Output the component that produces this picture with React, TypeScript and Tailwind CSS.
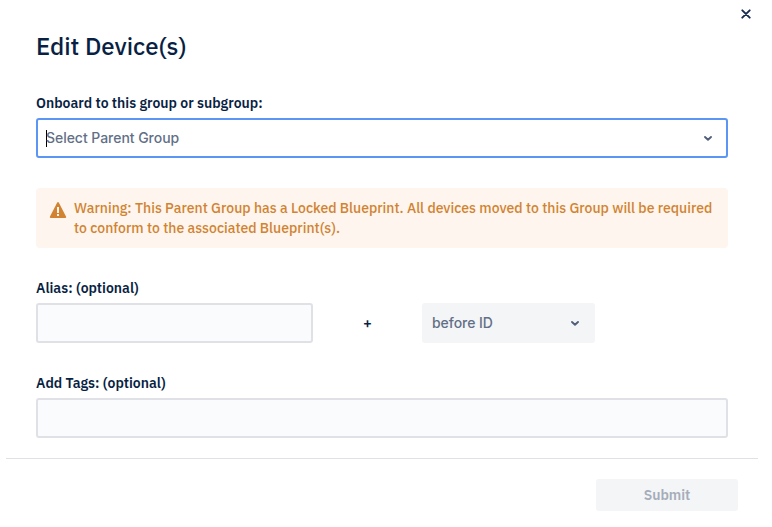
import React from "react";

const Chevron = () => (
  <svg className="size-6 shrink-0" viewBox="0 0 24 24" fill="none" stroke="#505f79" strokeWidth="1.9" strokeLinecap="round" strokeLinejoin="round" aria-hidden="true">
    <path d="M9 11l3 2.8 3-2.8" />
  </svg>
);

const WarningIcon = () => (
  <svg className="h-[17px] w-[18px] shrink-0" viewBox="0 0 18 17" aria-hidden="true">
    <path d="M8.1.7Q9-.5 9.9.7L17 14.6Q17.6 16 16.2 16H1.8Q.4 16 1 14.6Z" fill="#d18331" />
    <path d="M8 5h2v6H8zM8 12h2v2H8z" fill="#fdf5ee" />
  </svg>
);

const Label = ({ children }: { children: React.ReactNode }) => (
  <label className="block h-5 text-sm leading-5 font-semibold whitespace-nowrap">{children}</label>
);

export default function App() {
  return (
    <main className="flex h-[527px] w-[772px] flex-col overflow-hidden bg-white font-['IBM_Plex_Sans',Roboto,sans-serif] text-[#0a1f44]">
      <header className="flex h-[93px] items-start justify-between pr-[21px] pl-9">
        <h1 className="mt-[30px] text-2xl leading-8 font-medium">Edit Device(s)</h1>
        <button className="mt-[9px] size-[10px]" aria-label="Close">
          <svg className="size-[10px]" viewBox="0 0 10 10" fill="none" stroke="#172b4d" strokeWidth="1.9" strokeLinecap="round">
            <path d="M1.3 1.3l7.4 7.4M8.7 1.3L1.3 8.7" />
          </svg>
        </button>
      </header>

      <section className="flex h-[365px] flex-col pr-11 pl-9">
        <Label>Onboard to this group or subgroup:</Label>
        <div className="mt-[5px] flex h-10 items-center justify-between rounded-[3px] border-2 border-[#5c96f4] bg-white pr-[6px] pl-2">
          <div className="flex items-center">
            <span className="-mr-px h-[17px] w-px bg-black" />
            <span className="font-[Inter,sans-serif] text-sm leading-5 font-medium tracking-[-0.04px] text-[#626f86]">Select Parent Group</span>
          </div>
          <Chevron />
        </div>

        <div className="mt-[30px] flex h-[60px] items-start gap-[7px] rounded bg-[#fdf5ee] pt-[10px] pl-[13px] text-sm leading-5 font-medium tracking-[0.01px] text-[#d18331]">
          <div className="mt-1"><WarningIcon /></div>
          <p className="whitespace-nowrap">Warning: This Parent Group has a Locked Blueprint. All devices moved to this Group will be required<br />to conform to the associated Blueprint(s).</p>
        </div>

        <div className="mt-[30px]">
          <Label>Alias: (optional)</Label>
          <div className="mt-[5px] flex h-10 items-center">
            <input aria-label="Alias" className="h-10 w-[277px] rounded-[3px] border-2 border-[#dfe1e6] bg-[#fafbfc] outline-none" />
            <span className="w-[109px] text-center font-[Inter,sans-serif] text-sm leading-5 font-semibold">+</span>
            <div className="flex h-10 w-[173px] items-center justify-between rounded-[3px] bg-[#f4f5f7] pr-2 pl-[10px]">
              <span className="font-[Inter,sans-serif] text-sm leading-5 font-medium tracking-[-0.04px] text-[#626f86]">before ID</span>
              <Chevron />
            </div>
          </div>
        </div>

        <div className="mt-[30px]">
          <Label>Add Tags: (optional)</Label>
          <input aria-label="Tags" className="mt-[5px] block h-10 w-full rounded-[3px] border-2 border-[#dfe1e6] bg-[#fafbfc] outline-none" />
        </div>
      </section>

      <footer className="mr-[14px] ml-[6px] flex justify-end border-t border-[#dfe1e6] pt-5 pr-5">
        <button className="h-8 w-[142px] rounded-[3px] bg-[#f4f5f7] text-sm leading-5 font-semibold text-[#a5adba]">Submit</button>
      </footer>
    </main>
  );
}
